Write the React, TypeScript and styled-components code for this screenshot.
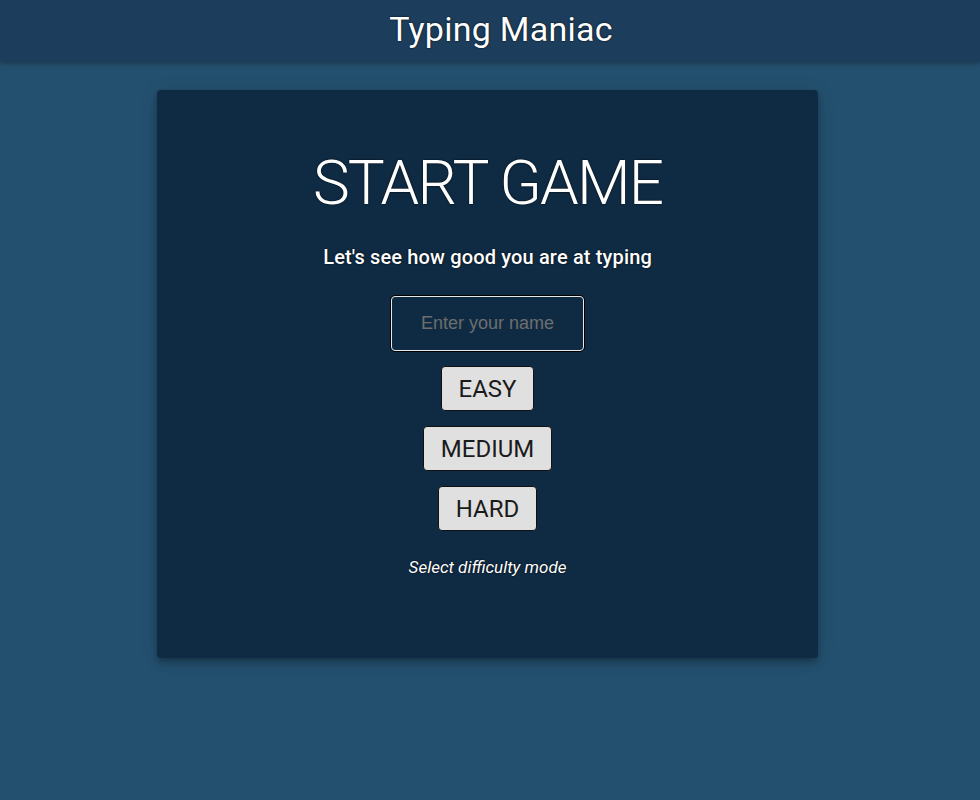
import React from "react";
import styled, { createGlobalStyle } from "styled-components";

const Global = createGlobalStyle`
  html, body { margin: 0; padding: 0; }
  body {
    background: #24506f;
    font-family: Roboto, "Noto Sans", Arial, sans-serif;
    min-height: 800px;
  }
`;

const Header = styled.header`
  height: 62px;
  padding-left: 22px;
  background: #1c3e5c;
  box-shadow: 0 2px 4px rgba(0, 0, 0, 0.25);
  display: flex;
  align-items: center;
  justify-content: center;
`;

const AppTitle = styled.h1`
  margin: 0 0 4px;
  font-family: Roboto, sans-serif;
  font-weight: 400;
  font-size: 34px;
  letter-spacing: 0.25px;
  color: #fff;
  text-shadow: 0 0 2px #000;
`;

const Main = styled.main`
  padding-top: 28px;
`;

const Card = styled.section`
  margin-left: 16%;
  width: 67.5%;
  height: 568px;
  box-sizing: border-box;
  background: #0f2b44;
  border-radius: 4px;
  box-shadow: 0 3px 5px -1px rgba(0, 0, 0, 0.2), 0 6px 10px 0 rgba(0, 0, 0, 0.14),
    0 1px 18px 0 rgba(0, 0, 0, 0.12);
  display: flex;
  flex-direction: column;
  align-items: center;
  padding-top: 55px;
`;

const Heading = styled.h2`
  margin: 0;
  font-family: Roboto, sans-serif;
  font-weight: 300;
  font-size: 62px;
  line-height: 75px;
  letter-spacing: -1.9px;
  color: #fff;
  text-shadow: 0 0 2px #000;
`;

const Subtitle = styled.p`
  margin: 25px 0 0;
  font-family: Roboto, sans-serif;
  font-weight: 500;
  font-size: 20px;
  line-height: 24px;
  letter-spacing: 0.15px;
  color: #fff;
  text-shadow: 0 0 2px #000;
`;

const NameInput = styled.input`
  margin-top: 26px;
  width: 195px;
  height: 57px;
  box-sizing: border-box;
  border: 1px solid #000;
  outline: 1.5px solid #e8e8e8;
  outline-offset: -2.5px;
  border-radius: 5px;
  background: transparent;
  color: #fff;
  font-family: "Liberation Sans", Arial, sans-serif;
  font-size: 18px;
  text-align: center;
  &::placeholder {
    color: #6e6e6e;
  }
`;

const ButtonStack = styled.div`
  margin-top: 14px;
  display: flex;
  flex-direction: column;
  align-items: center;
  gap: 15px;
`;

const ModeButton = styled.button`
  height: 45px;
  padding: 0 16.5px;
  box-sizing: border-box;
  background: #e0e0e0;
  border: 1px solid #111;
  border-radius: 4px;
  color: #1b1b1b;
  font-family: Roboto, sans-serif;
  font-size: 24px;
  font-weight: 400;
  cursor: pointer;
`;

const Hint = styled.p`
  margin: 26px 0 0;
  font-family: Roboto, sans-serif;
  font-style: italic;
  font-size: 17px;
  color: #fff;
  text-shadow: 0 0 2px #000;
`;

export default function App() {
  return (
    <>
      <Global />
      <Header>
        <AppTitle>Typing Maniac</AppTitle>
      </Header>
      <Main>
        <Card>
          <Heading>START GAME</Heading>
          <Subtitle>Let's see how good you are at typing</Subtitle>
          <NameInput placeholder="Enter your name" />
          <ButtonStack>
            <ModeButton>EASY</ModeButton>
            <ModeButton>MEDIUM</ModeButton>
            <ModeButton>HARD</ModeButton>
          </ButtonStack>
          <Hint>Select difficulty mode</Hint>
        </Card>
      </Main>
    </>
  );
}
